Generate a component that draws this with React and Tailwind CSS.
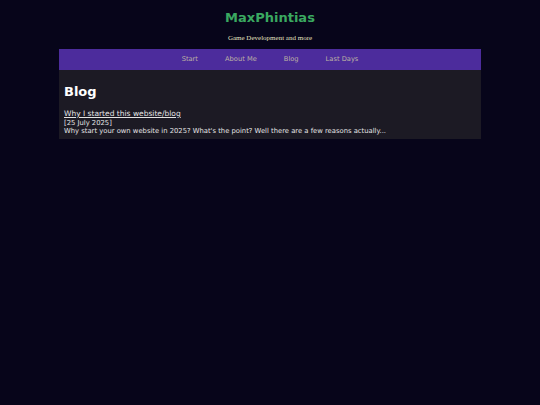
export default function App() {
  const sans = { fontFamily: '"DejaVu Sans", Verdana, sans-serif' };
  return (
    <div className="min-h-[405px] w-full bg-[#07051a]" style={sans}>
      <div className="pt-[10px] text-center text-[13px] font-bold leading-[16px] text-[#3aa860]">MaxPhintias</div>
      <div
        className="mt-[7px] text-center text-[7px] leading-[10px] text-[#e6e2c0]"
        style={{ fontFamily: '"Liberation Serif", "Times New Roman", serif' }}
      >
        Game Development and more
      </div>
      <div className="mx-[59px] mt-[6px]">
        <nav className="flex h-[21px] items-center justify-center gap-[27px] bg-[#4c2c9c] text-[6.7px] text-[#bcb2a4]">
          <span>Start</span>
          <span>About Me</span>
          <span>Blog</span>
          <span>Last Days</span>
        </nav>
        <div className="bg-[#1c1a24] px-[5px] pb-[3px] pt-[14px]">
          <div className="text-[13px] font-bold leading-[15px] text-white">Blog</div>
          <div className="mt-[10px] text-[6.8px] leading-[8.5px] text-[#e4e4e4]">
            <div className="text-[7.5px] leading-[9.5px] underline">Why I started this website/blog</div>
            <div>[25 July 2025]</div>
            <div>Why start your own website in 2025? What's the point? Well there are a few reasons actually...</div>
          </div>
        </div>
      </div>
    </div>
  );
}
